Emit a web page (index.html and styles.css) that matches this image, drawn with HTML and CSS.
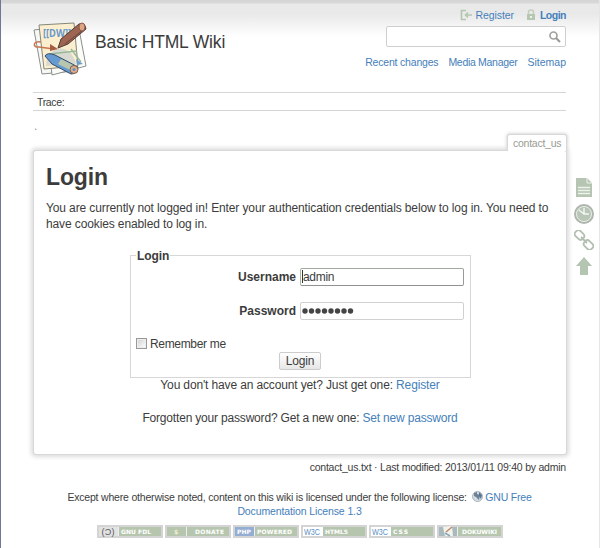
FILE: index.html
```html
<!DOCTYPE html>
<html lang="en">
<head>
<meta charset="utf-8">
<title>Basic HTML Wiki</title>
<link rel="stylesheet" href="styles.css">
</head>
<body>
<div class="site">
  <header class="header">
    <div class="brand">
      <svg class="logo" width="54" height="54" viewBox="0 0 54 54">
        <path d="M1 8 35 4 42 49 9 52Z" fill="#f7f8f4" stroke="#89908c"/>
        <path d="M14 9 46 7 53 44 19 53Z" fill="#fbfcf8" stroke="#89908c"/>
        <path d="M6 3 41 1 45 44 11 47Z" fill="#fbefd0" stroke="#858779"/>
        <path d="M13 44C14 22 38 20 43 42Z" fill="#d8d9d0"/>
        <text class="logo-text" x="10" y="14.500" textLength="28" lengthAdjust="spacingAndGlyphs">[[DW]]</text>
        <path d="M8 20C0 18-1 26 6 25L21 27" fill="none" stroke="#c8754f" stroke-width="1.5"/>
        <path d="m17 22 8 5-8 2z" fill="#aa5b43"/>
        <path d="M16 32Q25 31 44 29M38 27 48 40" fill="none" stroke="#98b89b" stroke-width="1.5"/>
        <path d="m43 37 7 5-6 1z" fill="#6c9cc8"/>
        <path d="m25 26 3-9L46 2q6-2 7 5L35 22z" fill="#9d6552" stroke="#513c36"/>
        <path d="M32 22 50 8" stroke="#704535"/>
        <ellipse cx="49" cy="5" rx="3" ry="4" fill="#dda784" stroke="#8b5948"/>
        <path d="m12 34 7 8 19 10q6 0 7-7L22 33q-8-3-10 1z" fill="#669bd1" stroke="#364c68"/>
        <path d="m28 37 12 6-3 5-12-6z" fill="#b7c6ac"/>
        <circle cx="41" cy="47.5" r="4" fill="#dfad87" stroke="#796052"/>
        <circle cx="41" cy="47.5" r="1.5" fill="#5b91c8"/>
      </svg>
      <h1>Basic HTML Wiki</h1>
    </div>
    <div class="tools">
      <div class="user-tools">
        <a class="register"><svg width="12" height="12" viewBox="0 0 12 12"><path d="M6 1.500H1.500v9H6M12 6H6M8 3.500 5.500 6 8 8.500" fill="none" stroke="#b3c7af" stroke-width="1.600"/></svg><span>Register</span></a>
        <a class="login-link"><svg width="10" height="12" viewBox="0 0 10 12"><path d="M2.500 6V3q0-2 2.500-2t2.500 2v3" fill="none" stroke="#c4cebf" stroke-width="1.500"/><path d="M1 5h8v6H1z" fill="#b5c7b0"/><path d="M4 7h2v2H4z" fill="#eef2ec"/></svg><b>Login</b></a>
      </div>
      <div class="search"><svg width="12" height="12" viewBox="0 0 12 12"><circle cx="4.500" cy="4.500" r="3.500" fill="none" stroke="#a0a39e" stroke-width="1.700"/><path d="m7 7 4 4" stroke="#999c97" stroke-width="2.200"/></svg></div>
      <nav class="site-tools"><a class="recent">Recent changes</a><a class="media">Media Manager</a><a class="sitemap">Sitemap</a></nav>
    </div>
  </header>
  <div class="trace">Trace:</div>
  <div class="dot">.</div>
  <main class="main">
    <div class="page-id">contact_us</div>
    <section class="page">
      <h2>Login</h2>
      <p class="intro">You are currently not logged in! Enter your authentication credentials below to log in. You need to<br>have cookies enabled to log in.</p>
      <form>
        <fieldset>
          <legend>Login</legend>
          <label class="field"><b>Username</b><span class="input focus"><i></i>admin</span></label>
          <label class="field"><b>Password</b><span class="input password"><svg width="54" height="8" viewBox="0 0 54 8"><g fill="#444"><circle cx="4" cy="4" r="2.700"/><circle cx="10.500" cy="4" r="2.700"/><circle cx="17" cy="4" r="2.700"/><circle cx="23.500" cy="4" r="2.700"/><circle cx="30" cy="4" r="2.700"/><circle cx="36.500" cy="4" r="2.700"/><circle cx="43" cy="4" r="2.700"/><circle cx="49.500" cy="4" r="2.700"/></g></svg></span></label>
          <label class="remember"><span class="check"></span>Remember me</label>
          <button type="button">Login</button>
        </fieldset>
      </form>
      <p class="account">You don't have an account yet? Just get one: <a>Register</a></p>
      <p class="forgot">Forgotten your password? Get a new one: <a>Set new password</a></p>
    </section>
    <aside class="page-tools">
      <svg width="20" height="20" viewBox="0 0 20 20"><path d="M2 0h11l5 5v14H2z" fill="#b5c5b2"/><path d="M13 0v5h5" fill="none" stroke="#eef2ec"/><path d="M4 9.500h12M4 12.500h12M4 15.500h12" stroke="#eef2ec" stroke-width="1.300"/></svg>
      <svg width="20" height="20" viewBox="0 0 20 20"><circle cx="10" cy="10" r="9" fill="#b7c6b5" stroke="#aeb6ad" stroke-width="2"/><circle cx="10" cy="10" r="7.500" fill="none" stroke="#e9eee7"/><path d="M10 4v6h5M10 10 5 6" fill="none" stroke="#f5f7f4" stroke-width="1.500"/></svg>
      <svg width="20" height="20" viewBox="0 0 20 20"><g fill="none" stroke="#b3bfb1" stroke-width="1.800"><rect x="-3.500" y="-5" width="7" height="10" rx="3" transform="translate(5.500 5)rotate(-45)"/><rect x="-3.500" y="-5" width="7" height="10" rx="3" transform="translate(14.500 15)rotate(-45)"/><path d="m7 7 6 6" stroke-width="2"/></g></svg>
      <svg width="20" height="20" viewBox="0 0 20 20"><path d="M10 1 18 10h-4v9H6v-9H2z" fill="#b4c5b1"/></svg>
    </aside>
  </main>
  <div class="doc-info">contact_us.txt · Last modified: 2013/01/11 09:40 by admin</div>
  <footer>
    <p><span class="license1">Except where otherwise noted, content on this wiki is licensed under the following license: <svg width="11" height="11" viewBox="0 0 11 11"><circle cx="5.500" cy="5.500" r="5" fill="#d3dce5" stroke="#aab2ba"/><path d="m2 2 3-1v2l3 1-1 5-3-3-2-1z" fill="#6f8194"/><path d="m7 1 3 3-1 4-2-3z" fill="#557593"/></svg> <a>GNU Free</a></span><br><a class="license2">Documentation License 1.3</a></p>
    <div class="badges">
      <svg width="66" height="13"><path d="M1 1h64v11H1z" fill="#b6c6ae" stroke="#d3d4d3" stroke-width="2"/><path d="M2 2h19v9H2z" fill="#e2e2e2"/><path d="M21.500 2v9" stroke="#eee"/><text class="mark dark" x="4.500" y="10" textLength="13">(Ɔ)</text><text x="24" y="9" textLength="30">GNU FDL</text></svg>
      <svg width="66" height="13"><path d="M1 1h64v11H1z" fill="#b6c6ae" stroke="#d3d4d3" stroke-width="2"/><path d="M21.500 2v9" stroke="#eee"/><text class="dollar" x="9" y="9">$</text><text x="30" y="9" textLength="29">DONATE</text></svg>
      <svg width="66" height="13"><path d="M1 1h64v11H1z" fill="#b6c6ae" stroke="#d3d4d3" stroke-width="2"/><path d="M2 2h19v9H2z" fill="#94aed3"/><path d="M21.500 2v9" stroke="#eee"/><text x="4" y="9" textLength="14">PHP</text><text x="24" y="9" textLength="35">POWERED</text></svg>
      <svg width="66" height="13"><path d="M1 1h64v11H1z" fill="#b6c6ae" stroke="#d3d4d3" stroke-width="2"/><path d="M2 2h20v9H2z" fill="#fff"/><text class="mark blue" x="3" y="10" textLength="16" lengthAdjust="spacingAndGlyphs">W3C</text><text x="24" y="9" textLength="23">HTML5</text></svg>
      <svg width="66" height="13"><path d="M1 1h64v11H1z" fill="#b6c6ae" stroke="#d3d4d3" stroke-width="2"/><path d="M2 2h20v9H2z" fill="#fff"/><text class="mark blue" x="3" y="10" textLength="16" lengthAdjust="spacingAndGlyphs">W3C</text><text x="24" y="9" textLength="15">CSS</text></svg>
      <svg width="66" height="13"><path d="M1 1h64v11H1z" fill="#b6c6ae" stroke="#d3d4d3" stroke-width="2"/><path d="M2 2h18v9H2z" fill="#aab9bd"/><path d="M20.500 2v9" stroke="#eee"/><path d="m6 2 9-1 1 10H8z" fill="#f5f3e9"/><path d="m9 7 6-5" stroke="#b68c70" stroke-width="1.500"/><path d="m8 8 5 3" stroke="#83aabe" stroke-width="1.500"/><text x="25" y="9" textLength="35">DOKUWIKI</text></svg>
    </div>
  </footer>
</div>
</body>
</html>
```
FILE: styles.css
```css
* { box-sizing: border-box; }
html, body { margin: 0; height: 548px; overflow: hidden; }
body { font: 12px/16.4px "Liberation Sans", Arial, sans-serif; color: #3c3c3c; background: #fff; }
h1, h2, p { margin: 0; }
svg { display: block; flex: none; }
a { color: #4580ba; }
.site { height: 548px; padding: 0 33px 0 32px; border-left: 1px solid #6e7999; border-right: 1px solid #e5e5e5; background: linear-gradient(#d5d5d5 0, #d8d8d8 3px, #e9e9e9 4px, #e9e9e9 14px, #fff 37px); white-space: nowrap; }
.header { display: flex; justify-content: space-between; height: 92px; }
.brand { display: flex; }
.logo { margin-top: 22px; }
.logo-text { font: bold 10.5px "Open Sans", sans-serif; fill: #6898cb; }
h1 { margin: 32px 0 0 8px; font-size: 17.5px; line-height: 20px; font-weight: normal; letter-spacing: -.16px; }
.tools { width: 180px; display: flex; flex-direction: column; align-items: flex-end; font-size: 10.5px; line-height: 12px; }
.user-tools { display: flex; height: 26px; padding-top: 9px; gap: 12px; }
.user-tools a { display: flex; gap: 4px; }
.register { letter-spacing: -.1px; }
.login-link { letter-spacing: -.5px; }
.search { width: 180px; height: 21px; border: 1px solid #cfcfcf; border-radius: 2px; background: #fff; display: flex; align-items: center; justify-content: flex-end; padding-right: 4px; }
.site-tools { display: flex; gap: 10px; margin-top: 9px; }
.recent { letter-spacing: -.19px; }
.media { letter-spacing: -.3px; }
.trace { height: 19px; border: solid #d5d5d5; border-width: 1px 0; padding: 3px 4px; font-size: 10.5px; line-height: 13px; letter-spacing: -.35px; }
.dot { height: 24px; padding: 9px 0 0 1px; font-size: 12px; line-height: 12px; color: #949c8a; }
.main { position: relative; height: 319px; padding-left: 1px; display: flex; flex-direction: column; align-items: flex-end; }
.page-id { position: relative; z-index: 1; width: 58px; height: 16px; padding: 2px 5px; background: #fff; color: #999c92; font-size: 10.5px; line-height: 13px; letter-spacing: -.25px; border-radius: 2px 2px 0 0; box-shadow: 0 0 0 1px #d8d8d8, 0 0 3px 2px #dcdcdc; clip-path: inset(-6px -6px 0 -6px); }
.page { width: 532px; height: 303px; padding: 12px; border-radius: 2px; background: #fff; box-shadow: 0 0 0 1px #d8d8d8, 0 0 4px 3px #dcdcdc; }
h2 { font-size: 23px; line-height: 28px; letter-spacing: -.15px; }
.intro { margin-top: 9px; letter-spacing: -.117px; }
form { display: flex; margin: 16px 0 0 84px; }
fieldset { width: 341px; height: 129px; margin: 0; padding: 5px 6px 0; border: 1px solid #d7d7d7; min-width: 0; }
legend { font-weight: bold; line-height: 14px; padding: 0 1px; margin-left: -1px; letter-spacing: -.1px; }
.field { display: flex; justify-content: flex-end; align-items: center; gap: 4px; height: 18px; margin-bottom: 16px; }
.input { display: flex; align-items: center; width: 164px; height: 18px; border: 1px solid #d1d1d1; border-radius: 2px; padding: 0 1px; letter-spacing: -.3px; }
.focus { border-color: #9eaa9c #999 #919191 #a8b4a6; }
.focus i { width: 1px; height: 13px; background: #333; }
.password { padding: 0; }
.remember { display: flex; align-items: center; height: 16px; gap: 3px; margin: 1px 0 0 -1px; letter-spacing: -.33px; }
.check { width: 11px; height: 11px; border: 1px solid #999; background: linear-gradient(135deg, #d0d2cf, #fff); outline: 1px solid #eee; outline-offset: -2px; }
button { display: block; margin: 0 auto 0 142px; width: 42px; height: 18px; padding: 0; font: 12px/16px "Liberation Sans", sans-serif; letter-spacing: -.15px; color: #3c3c3c; border: 1px solid #ccc; border-radius: 2px; background: linear-gradient(#fff, #e7e7e7); }
.account, .forgot { text-align: center; }
.account { margin-top: -1px; letter-spacing: -.14px; }
.forgot { margin-top: 17px; letter-spacing: -.185px; }
.page-tools { position: absolute; left: 541px; top: 43px; display: flex; flex-direction: column; gap: 6px; }
.doc-info { height: 36px; padding-top: 7px; text-align: right; font-size: 10.5px; line-height: 12px; letter-spacing: -.22px; }
footer { text-align: center; font-size: 10.5px; line-height: 14px; }
footer p svg { display: inline-block; vertical-align: -1px; margin-left: 2px; }
.license1 { letter-spacing: -.19px; }
.license2 { letter-spacing: -.12px; }
.badges { display: flex; justify-content: center; gap: 2px; margin-top: 7px; }
.badges text { font: bold 6px "DejaVu Sans", sans-serif; fill: #fff; }
.badges .mark { font: 9px "Liberation Sans", sans-serif; }
.badges .dark { fill: #555; }
.badges .blue { fill: #5b8fc4; }
.badges .dollar { fill: #f4f0c8; }
```
